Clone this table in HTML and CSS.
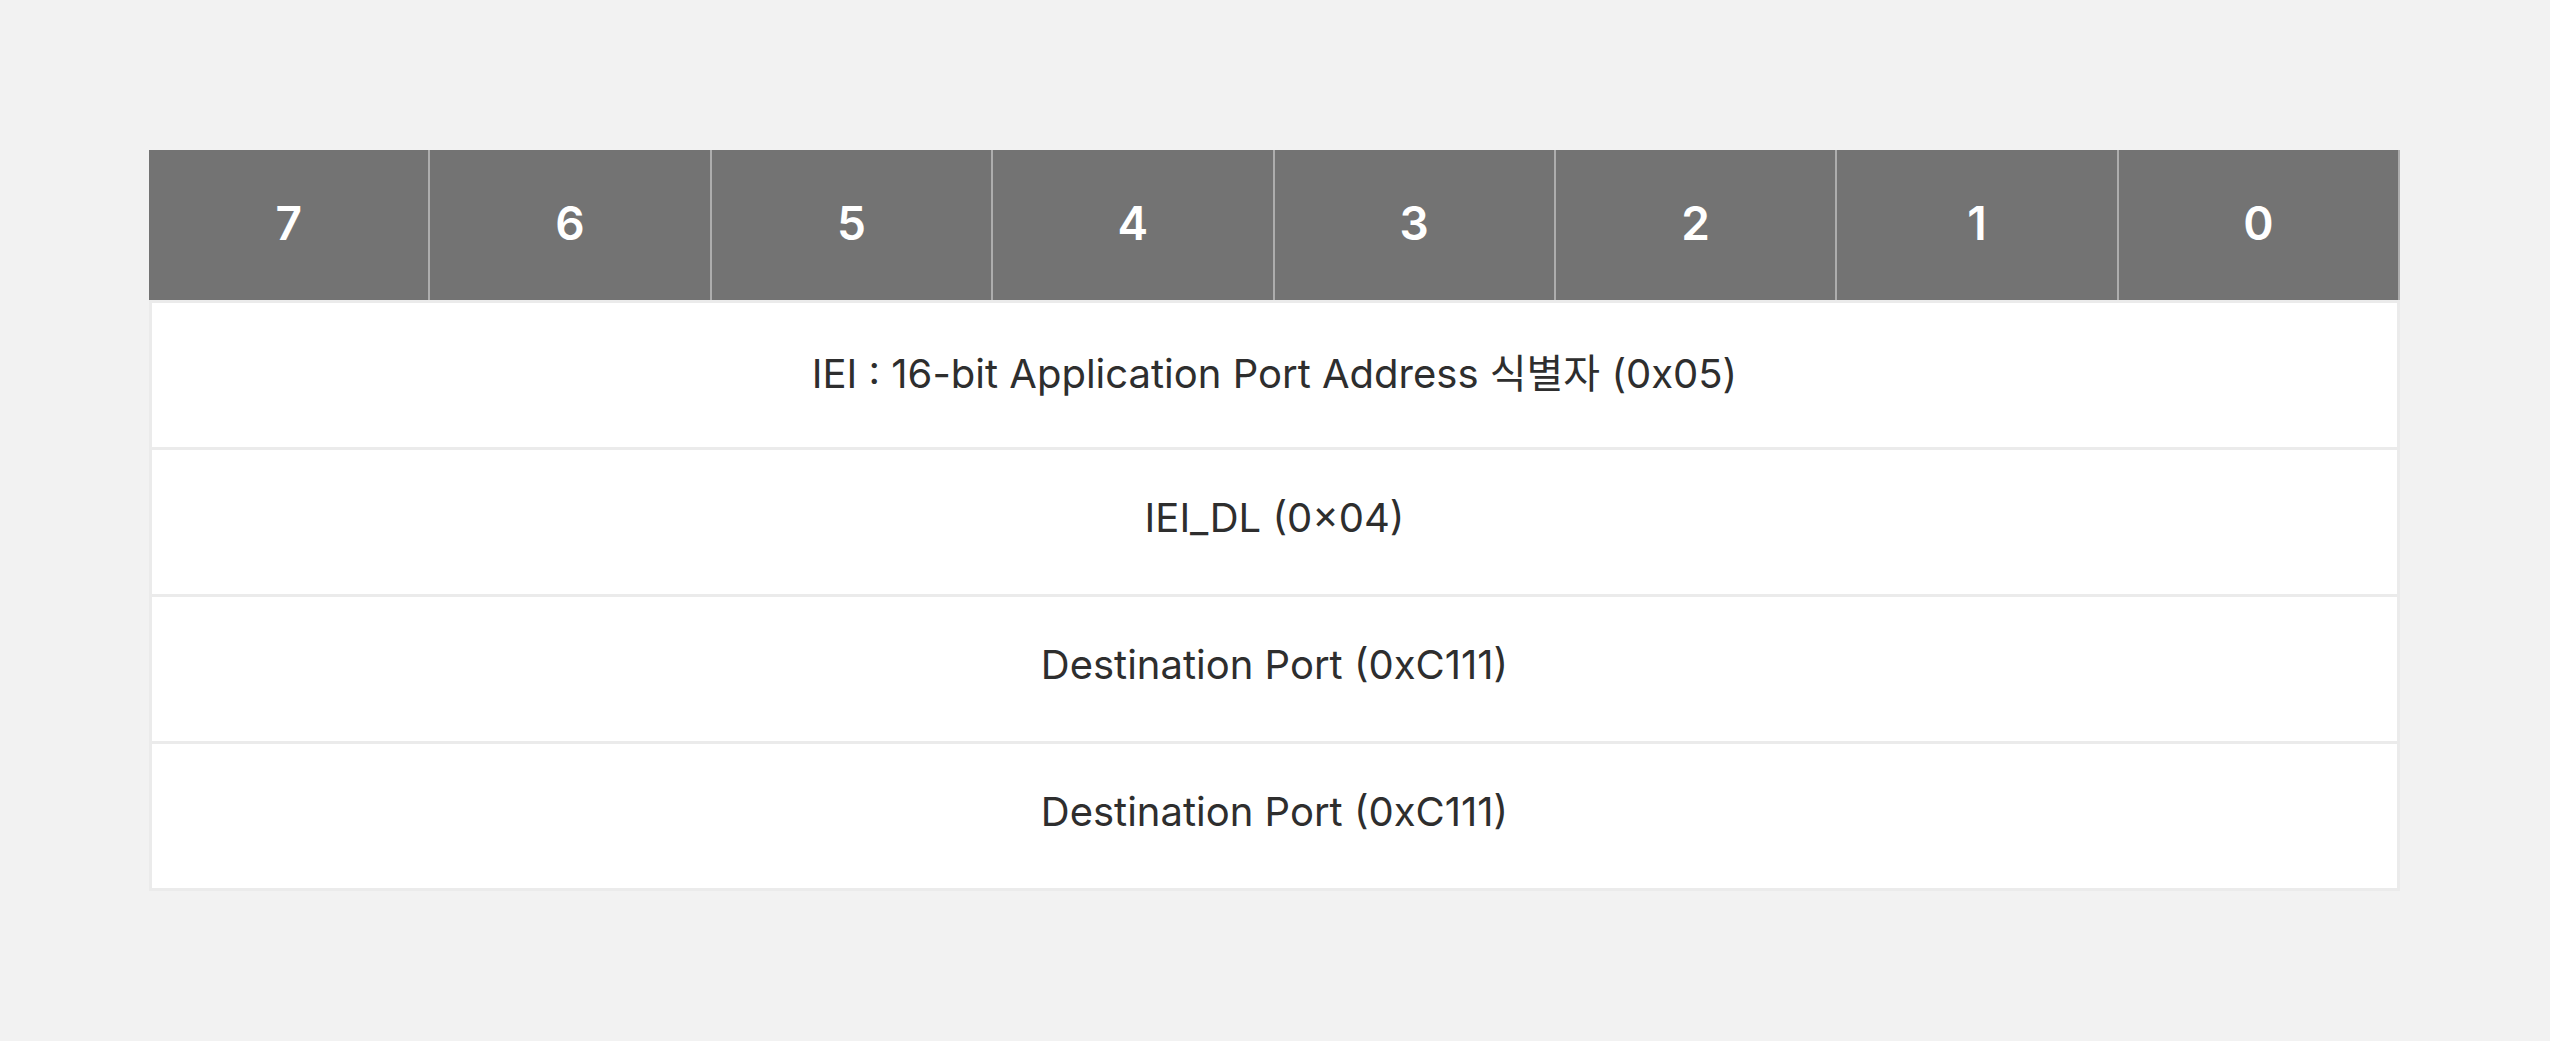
FILE: index.html
```html
<!DOCTYPE html>
<html lang="ko">
<head>
<meta charset="utf-8">
<title>IEI Table</title>
<link rel="stylesheet" href="styles.css">
</head>
<body>
<main class="page">
  <section class="bit-table">
    <div class="bit-head">
      <div class="bit-cell">7</div>
      <div class="bit-cell">6</div>
      <div class="bit-cell">5</div>
      <div class="bit-cell">4</div>
      <div class="bit-cell">3</div>
      <div class="bit-cell">2</div>
      <div class="bit-cell">1</div>
      <div class="bit-cell">0</div>
    </div>
    <div class="bit-body">
      <div class="bit-row">IEI : 16-bit Application Port Address 식별자 (0x05)</div>
      <div class="bit-row">IEI_DL (0×04)</div>
      <div class="bit-row">Destination Port (0xC111)</div>
      <div class="bit-row">Destination Port (0xC111)</div>
    </div>
  </section>
</main>
</body>
</html>
```
FILE: styles.css
```css
html, body {
  margin: 0;
  padding: 0;
  background: #f2f2f2;
}

.page {
  padding: 150px 150px 150px 149px;
  font-family: Inter, "Noto Sans CJK KR", sans-serif;
}

.bit-table {
  display: flex;
  flex-direction: column;
}

.bit-head {
  display: grid;
  grid-template-columns: repeat(8, 1fr);
  height: 150px;
  background: #737373;
}

.bit-cell {
  display: flex;
  align-items: center;
  justify-content: center;
  padding-bottom: 4px;
  color: #ffffff;
  font-size: 46px;
  font-weight: 600;
  border-right: 2px solid #adadad;
}

.bit-body {
  display: flex;
  flex-direction: column;
  gap: 3px;
  padding: 3px;
  background: #ebebeb;
}

.bit-row {
  height: 144px;
  box-sizing: border-box;
  padding-bottom: 9px;
  background: #ffffff;
  display: flex;
  align-items: center;
  justify-content: center;
  color: #2e2e2e;
  font-size: 40px;
  font-weight: 400;
}
```
